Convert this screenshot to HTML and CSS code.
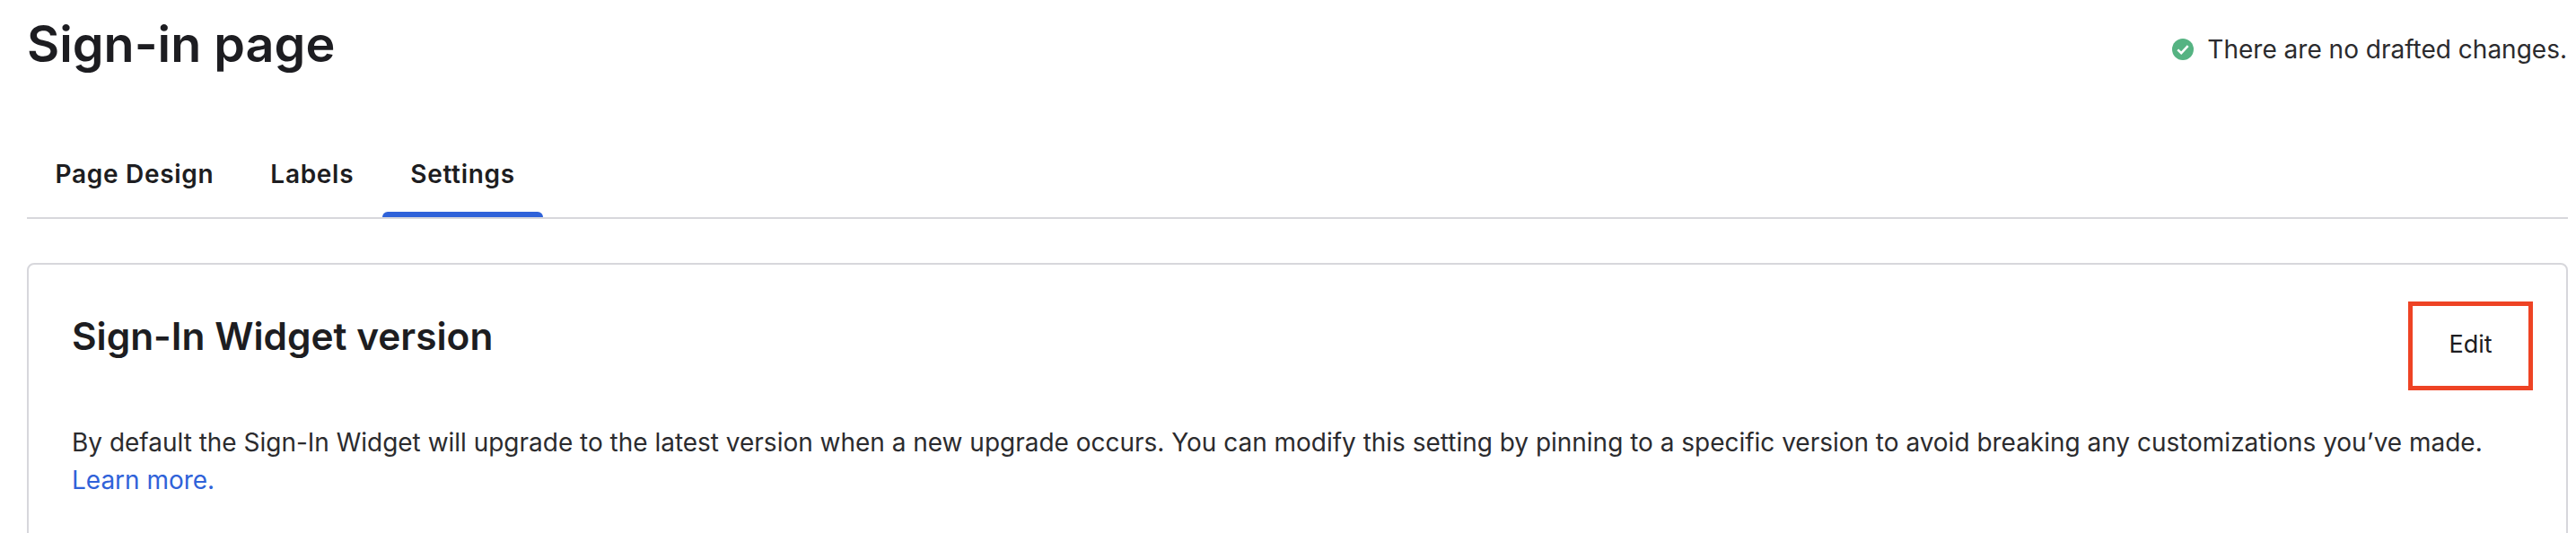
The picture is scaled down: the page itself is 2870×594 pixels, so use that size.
FILE: index.html
```html
<!DOCTYPE html>
<html lang="en">
<head>
<meta charset="utf-8">
<title>Sign-in page</title>
<link rel="stylesheet" href="styles.css">
</head>
<body>
<header class="page-head">
  <h1 class="page-title">Sign-in page</h1>
  <div class="status">
    <svg class="status-icon" viewBox="0 0 24 24" aria-hidden="true">
      <circle cx="12" cy="12" r="12" fill="#55b382"/>
      <path d="M6.3 12.4l3.9 3.8 7.5-8" fill="none" stroke="#fff" stroke-width="2.6"/>
    </svg>
    <span>There are no drafted changes.</span>
  </div>
</header>
<nav class="tabs">
  <a class="tab"><span class="tab-label">Page Design</span><span class="tab-bar"></span></a>
  <a class="tab"><span class="tab-label">Labels</span><span class="tab-bar"></span></a>
  <a class="tab tab-active"><span class="tab-label">Settings</span><span class="tab-bar"></span></a>
</nav>
<section class="card">
  <div class="card-head">
    <h2 class="card-title">Sign-In Widget version</h2>
    <button class="edit" type="button">Edit</button>
  </div>
  <p class="card-text">By default the Sign-In Widget will upgrade to the latest version when a new upgrade occurs. You can modify this setting by pinning to a specific version to avoid breaking any customizations you’ve made. <a class="link">Learn more.</a></p>
</section>
</body>
</html>
```

FILE: styles.css
```css
* { box-sizing: border-box; }
html, body { height: 100%; }
body {
  margin: 0;
  padding: 0 9px 0 30px;
  background: #fff;
  color: #1d1d21;
  font-family: Inter, "Liberation Sans", sans-serif;
  overflow: hidden;
}
.page-head {
  display: flex;
  justify-content: space-between;
  align-items: flex-start;
  height: 158px;
}
.page-title {
  margin: 15px 0 0 0;
  font-size: 55.7px;
  line-height: 68px;
  font-weight: 600;
}
.status {
  display: flex;
  align-items: center;
  gap: 15px;
  margin: 38px 1px 0 0;
  font-size: 28px;
  line-height: 34px;
  color: #2b2b2e;
}
.status-icon { width: 24px; height: 24px; flex: none; }
.tabs {
  display: flex;
  height: 86px;
  border-bottom: 2px solid #d7d7dc;
}
.tab {
  display: flex;
  flex-direction: column;
  justify-content: flex-end;
}
.tab-label {
  padding: 0 31.5px;
  margin-bottom: 25px;
  font-size: 28px;
  line-height: 34px;
  font-weight: 600;
  letter-spacing: 0.7px;
}
.tab-bar {
  height: 6px;
  border-radius: 6px 6px 0 0;
}
.tab-active .tab-bar { background: #2f62d9; }
.card {
  margin-top: 49px;
  padding: 41px 37px 0 47px;
  height: 340px;
  border: 2px solid #d7d7dc;
  border-radius: 8px;
}
.card-head {
  display: flex;
  justify-content: space-between;
  align-items: flex-start;
}
.card-title {
  margin: 8px 0 0 1px;
  font-size: 42.4px;
  line-height: 62px;
  font-weight: 600;
}
.edit {
  width: 139px;
  height: 99px;
  padding: 0 0 5px;
  background: #fff;
  border: 5px solid #ee4324;
  color: #1d1d21;
  font-family: inherit;
  font-size: 27px;
  font-weight: 400;
}
.card-text {
  margin: 37px 0 0 1px;
  font-size: 27.98px;
  line-height: 42px;
  color: #2b2b2e;
}
.link { color: #2f62d9; }
```
